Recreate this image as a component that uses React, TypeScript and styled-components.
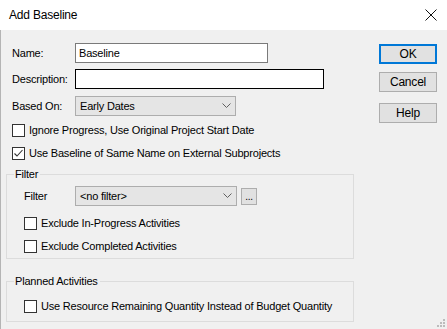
import styled, { createGlobalStyle } from "styled-components";

const GlobalStyle = createGlobalStyle`
    * {
        box-sizing: border-box;
    }

    body {
        margin: 0;
        background: #f0f0f0;
        font-family: "Liberation Sans", Arial, sans-serif;
        font-size: 11px;
        letter-spacing: -0.2px;
        color: #000000;
    }
`;

const Dialog = styled.div`
    width: 447px;
    height: 329px;
    display: flex;
    flex-direction: column;
    position: relative;
    overflow: hidden;
`;

const TitleBar = styled.div`
    height: 30px;
    background: #ffffff;
    display: flex;
    align-items: center;
    justify-content: space-between;
    padding: 0 8px 0 9px;
    font-size: 12px;
`;

const CloseButton = styled.div`
    width: 14px;
    height: 14px;
    display: flex;
    align-items: center;
    justify-content: center;
    margin-right: 1px;
`;

const Body = styled.div`
    flex-grow: 1;
    display: flex;
    border-left: 1px solid #b4b4b4;
`;

const FormColumn = styled.div`
    width: 348px;
    margin-left: 5px;
    padding-top: 13px;
    display: flex;
    flex-direction: column;
`;

const ButtonColumn = styled.div`
    margin-left: 25px;
    padding-top: 14px;
    display: flex;
    flex-direction: column;
`;

const FieldRow = styled.div<{ $gap?: number }>`
    display: grid;
    grid-template-columns: 63px auto;
    align-items: center;
    height: 20px;
    padding-left: 6px;
    margin-top: ${(p) => p.$gap ?? 0}px;
`;

const Label = styled.span`
    line-height: 15px;
`;

const TextBox = styled.div<{ $width: number; $focused?: boolean }>`
    width: ${(p) => p.$width}px;
    height: 20px;
    background: #ffffff;
    border: 1px solid ${(p) => (p.$focused ? "#000000" : "#7a7a7a")};
    padding: 0 3px;
    display: flex;
    align-items: center;
`;

const Select = styled.div<{ $width: number }>`
    width: ${(p) => p.$width}px;
    height: 20px;
    background: #e5e5e5;
    border: 1px solid #adadad;
    padding: 0 4px 0 4px;
    display: flex;
    align-items: center;
    justify-content: space-between;
`;

const CheckRow = styled.label<{ $gap?: number; $indent?: number }>`
    display: flex;
    align-items: center;
    gap: 4px;
    height: 16px;
    padding-left: ${(p) => p.$indent ?? 6}px;
    margin-top: ${(p) => p.$gap ?? 0}px;
    white-space: nowrap;
`;

const Box = styled.span`
    width: 13px;
    height: 13px;
    background: #ffffff;
    border: 1px solid #333333;
    display: flex;
    align-items: center;
    justify-content: center;
    flex-shrink: 0;
`;

const Group = styled.fieldset<{ $gap: number; $height: number }>`
    margin: ${(p) => p.$gap}px 0 0 0;
    padding: 0;
    height: ${(p) => p.$height}px;
    border: 1px solid #dcdcdc;
    min-width: 0;

    legend {
        margin-left: 7px;
        padding: 0 2px 0 1px;
        line-height: 15px;
    }
`;

const FilterRow = styled.div`
    display: flex;
    align-items: center;
    padding-left: 17px;
    margin-top: 4px;
    height: 20px;
`;

const FilterLabel = styled.span`
    width: 51px;
`;

const MoreButton = styled.div`
    width: 16px;
    height: 17px;
    margin-left: 4px;
    background: #e1e1e1;
    border: 1px solid #adadad;
    display: flex;
    align-items: flex-end;
    justify-content: center;
    font-size: 10px;
    line-height: 12px;
    padding-bottom: 1px;
`;

const Button = styled.div<{ $default?: boolean; $gap?: number }>`
    width: 58px;
    height: 20px;
    background: #e1e1e1;
    border: ${(p) => (p.$default ? "2px solid #0078d7" : "1px solid #adadad")};
    display: flex;
    align-items: center;
    justify-content: center;
    margin-top: ${(p) => p.$gap ?? 0}px;
    font-size: 12px;
`;

const Grip = styled.svg`
    position: absolute;
    right: 2px;
    bottom: 2px;
`;

function Chevron() {
    return (
        <svg width="9" height="6" viewBox="0 0 9 6">
            <path d="M0.5 0.5 L4.5 4.5 L8.5 0.5" fill="none" stroke="#606060" strokeWidth="1" />
        </svg>
    );
}

function CheckBox({ checked }: { checked?: boolean }) {
    return (
        <Box>
            {checked && (
                <svg width="11" height="11" viewBox="0 0 11 11">
                    <path d="M1.5 5.5 L4 8 L9.5 2" fill="none" stroke="#333333" strokeWidth="1.1" />
                </svg>
            )}
        </Box>
    );
}

export default function App() {
    return (
        <>
            <GlobalStyle />
            <Dialog>
                <TitleBar>
                    <span>Add Baseline</span>
                    <CloseButton>
                        <svg width="12" height="12" viewBox="0 0 12 12">
                            <path d="M0.5 0.5 L11.5 11.5 M11.5 0.5 L0.5 11.5" stroke="#111111" strokeWidth="1" />
                        </svg>
                    </CloseButton>
                </TitleBar>
                <Body>
                    <FormColumn>
                        <FieldRow>
                            <Label>Name:</Label>
                            <TextBox $width={193}>Baseline</TextBox>
                        </FieldRow>
                        <FieldRow $gap={6}>
                            <Label>Description:</Label>
                            <TextBox $width={249} $focused />
                        </FieldRow>
                        <FieldRow $gap={7}>
                            <Label>Based On:</Label>
                            <Select $width={161}>
                                <span>Early Dates</span>
                                <Chevron />
                            </Select>
                        </FieldRow>
                        <CheckRow $gap={6}>
                            <CheckBox />
                            <span>Ignore Progress, Use Original Project Start Date</span>
                        </CheckRow>
                        <CheckRow $gap={7}>
                            <CheckBox checked />
                            <span>Use Baseline of Same Name on External Subprojects</span>
                        </CheckRow>
                        <Group $gap={6} $height={92}>
                            <legend>Filter</legend>
                            <FilterRow>
                                <FilterLabel>Filter</FilterLabel>
                                <Select $width={162}>
                                    <span>&lt;no filter&gt;</span>
                                    <Chevron />
                                </Select>
                                <MoreButton>...</MoreButton>
                            </FilterRow>
                            <CheckRow $indent={17} $gap={9}>
                                <CheckBox />
                                <span>Exclude In-Progress Activities</span>
                            </CheckRow>
                            <CheckRow $indent={17} $gap={7}>
                                <CheckBox />
                                <span>Exclude Completed Activities</span>
                            </CheckRow>
                        </Group>
                        <Group $gap={15} $height={48}>
                            <legend>Planned Activities</legend>
                            <CheckRow $indent={17} $gap={9}>
                                <CheckBox />
                                <span>Use Resource Remaining Quantity Instead of Budget Quantity</span>
                            </CheckRow>
                        </Group>
                    </FormColumn>
                    <ButtonColumn>
                        <Button $default>OK</Button>
                        <Button $gap={8}>Cancel</Button>
                        <Button $gap={11}>Help</Button>
                    </ButtonColumn>
                </Body>
                <Grip width="10" height="10" viewBox="0 0 10 10">
                    <rect x="8" y="2" width="2" height="2" fill="#bcbcbc" />
                    <rect x="5" y="5" width="2" height="2" fill="#bcbcbc" />
                    <rect x="8" y="5" width="2" height="2" fill="#bcbcbc" />
                    <rect x="2" y="8" width="2" height="2" fill="#bcbcbc" />
                    <rect x="5" y="8" width="2" height="2" fill="#bcbcbc" />
                    <rect x="8" y="8" width="2" height="2" fill="#bcbcbc" />
                </Grip>
            </Dialog>
        </>
    );
}
